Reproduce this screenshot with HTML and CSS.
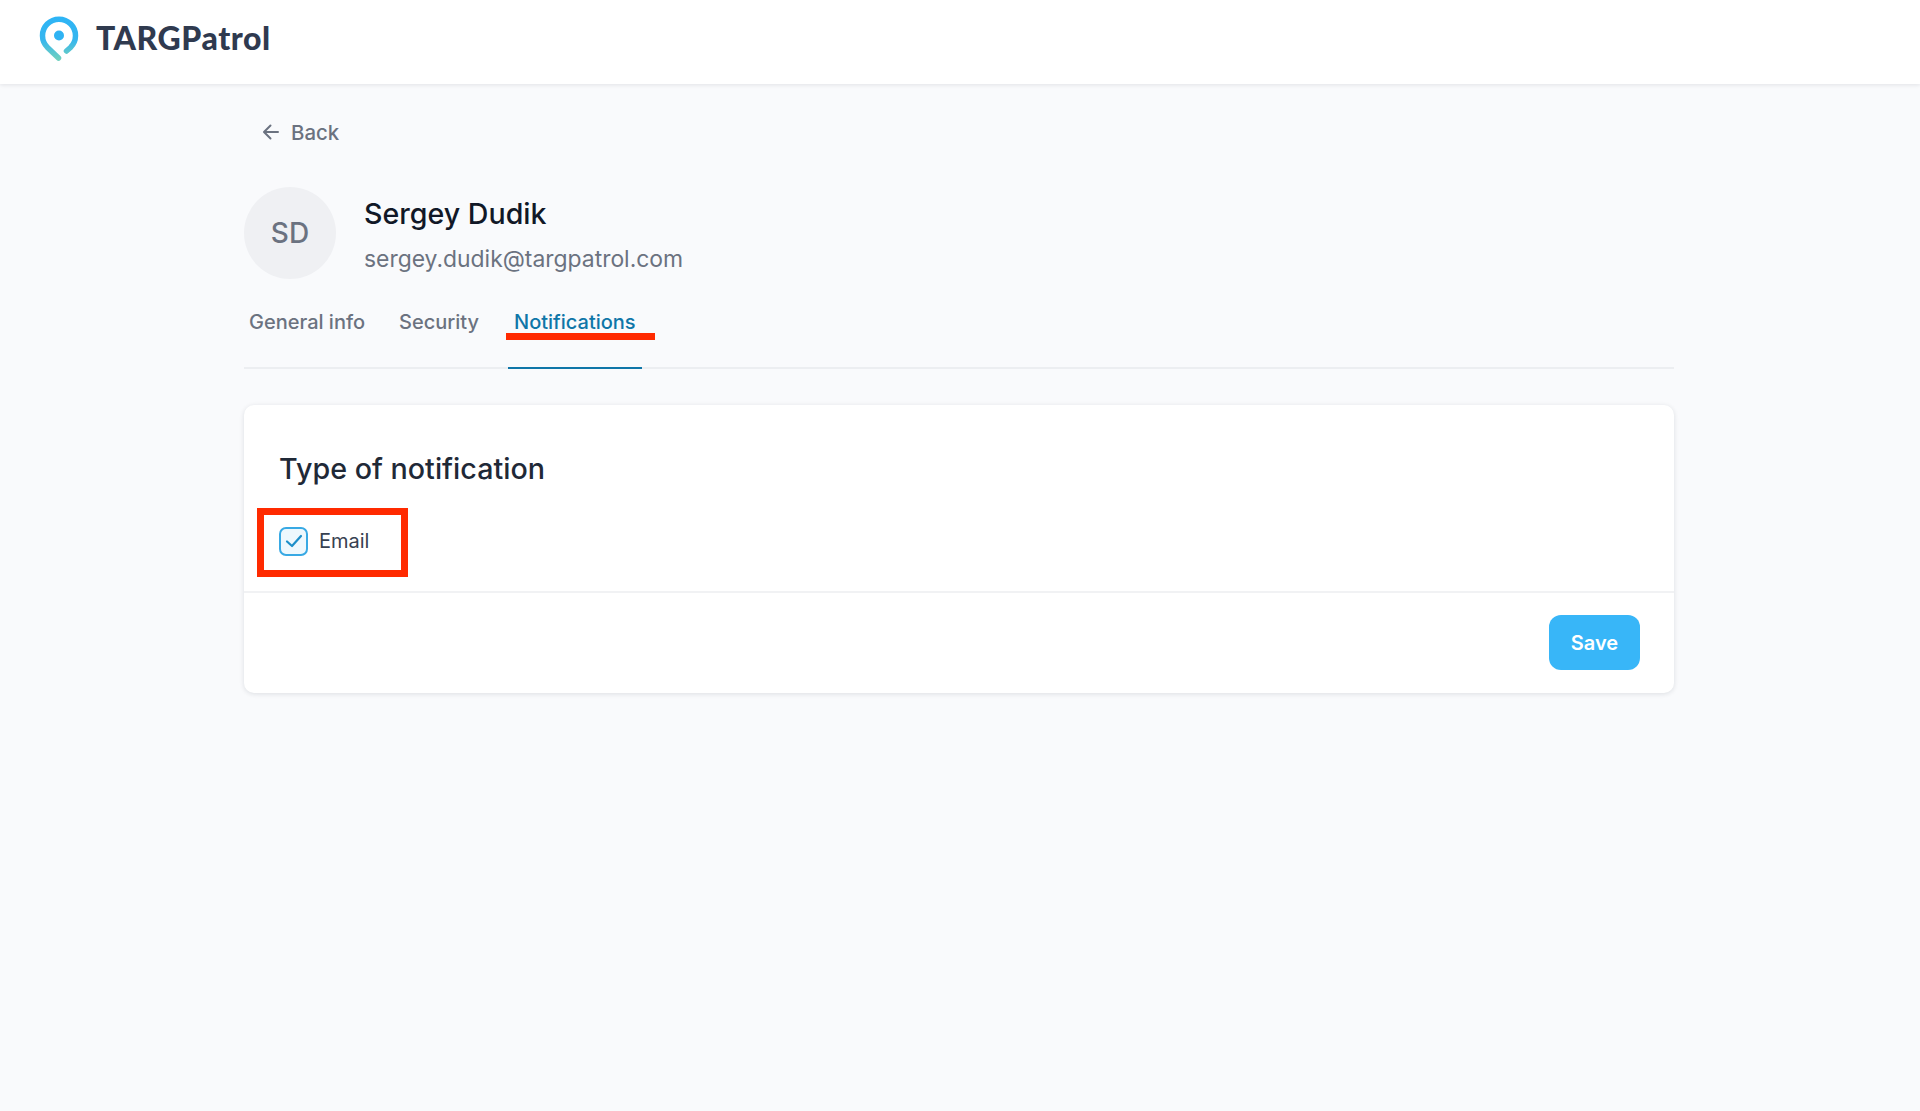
FILE: index.html
```html
<!DOCTYPE html>
<html lang="en">
<head>
  <meta charset="UTF-8">
  <meta name="viewport" content="width=device-width, initial-scale=1.0">
  <title>TARGPatrol - Notifications</title>
  <link rel="stylesheet" href="styles.css">
</head>
<body>
  <header class="topbar">
    <svg class="logo-icon" width="40" height="46" viewBox="0 0 40 46" fill="none">
      <defs>
        <linearGradient id="logo-grad" gradientUnits="userSpaceOnUse" x1="20" y1="2" x2="20" y2="44">
          <stop offset="0" stop-color="#2db4f6"/>
          <stop offset="0.55" stop-color="#36b6ee"/>
          <stop offset="1" stop-color="#6fd0bf"/>
        </linearGradient>
      </defs>
      <path d="M19.5 43 L8.5 32.5 A16.5 16.5 0 1 1 31.5 32.5 L27.5 36" stroke="url(#logo-grad)" stroke-width="5.5" stroke-linecap="round" stroke-linejoin="round"/>
      <circle cx="20" cy="20.5" r="5" fill="#2fb3f3"/>
    </svg>
    <span class="logo-text">TARGPatrol</span>
  </header>

  <main class="content">
    <a class="back-link" href="#">
      <svg width="20" height="20" viewBox="0 0 20 20" fill="none" stroke="#6b7280" stroke-width="2" stroke-linecap="round" stroke-linejoin="round">
        <path d="M17 10H3.5M9.5 3.5L3 10l6.5 6.5"/>
      </svg>
      <span>Back</span>
    </a>

    <div class="profile">
      <div class="avatar">SD</div>
      <div class="profile-info">
        <div class="profile-name">Sergey Dudik</div>
        <div class="profile-email">sergey.dudik@targpatrol.com</div>
      </div>
    </div>

    <nav class="tabs">
      <a class="tab" href="#">General info</a>
      <a class="tab" href="#">Security</a>
      <a class="tab active" href="#">Notifications<span class="red-mark"></span></a>
    </nav>

    <section class="card">
      <div class="card-body">
        <h2 class="card-title">Type of notification</h2>
        <label class="check-row">
          <span class="checkbox">
            <svg width="20" height="16" viewBox="0 0 20 16" fill="none" stroke="#1d8fc9" stroke-width="2.2" stroke-linecap="round" stroke-linejoin="round">
              <path d="M3 8.5l5 4.5L17 3"/>
            </svg>
          </span>
          <span>Email</span>
        </label>
      </div>
      <div class="card-footer">
        <button class="save-btn" type="button">Save</button>
      </div>
    </section>
  </main>
</body>
</html>
```

FILE: styles.css
```css
* {
  margin: 0;
  padding: 0;
  box-sizing: border-box;
}

body {
  font-family: Inter, 'Noto Sans', sans-serif;
  background: #f9fafc;
  color: #111827;
  min-height: 100vh;
}

a {
  text-decoration: none;
}

.topbar {
  display: flex;
  align-items: center;
  height: 84px;
  padding: 0 0 9px 39px;
  background: #ffffff;
  box-shadow: 0 1px 4px rgba(17, 24, 39, 0.1);
}

.logo-icon {
  margin-right: 17px;
}

.logo-text {
  font-family: Lato, sans-serif;
  font-size: 32px;
  font-weight: 900;
  letter-spacing: 0.55px;
  color: #2f3a4f;
}

.content {
  width: 1430px;
  margin-left: 244px;
}

.back-link {
  display: flex;
  align-items: center;
  gap: 10px;
  margin: 36px 0 0 17px;
  height: 24px;
  font-size: 20.4px;
  font-weight: 500;
  color: #6b7280;
}

.profile {
  display: flex;
  align-items: center;
  gap: 28px;
  margin-top: 43px;
}

.avatar {
  display: flex;
  align-items: center;
  justify-content: center;
  width: 92px;
  height: 92px;
  border-radius: 50%;
  background: #eff0f3;
  font-size: 28px;
  font-weight: 500;
  color: #6b7280;
}

.profile-info {
  padding-top: 4px;
}

.profile-name {
  font-size: 28.6px;
  line-height: 36px;
  font-weight: 500;
  color: #111827;
}

.profile-email {
  margin-top: 11px;
  font-size: 22.9px;
  line-height: 32px;
  color: #6b7280;
}

.tabs {
  display: flex;
  gap: 18px;
  margin-top: 24px;
  height: 66px;
  padding-left: 5px;
  border-bottom: 2px solid #eceef1;
}

.tab {
  position: relative;
  height: 66px;
  padding: 5px 0 0;
  margin-right: 16px;
  font-size: 20px;
  line-height: 28px;
  font-weight: 500;
  color: #6b7280;
}

.tab.active {
  margin-left: -5px;
  padding: 5px 6px 0;
  color: #0f76a8;
  border-bottom: 2px solid #0f76a8;
}

.red-mark {
  position: absolute;
  left: -2px;
  top: 30px;
  width: 149px;
  height: 7px;
  background: #ff2a00;
}

.card {
  margin-top: 36px;
  background: #ffffff;
  border-radius: 10px;
  box-shadow: 0 1px 5px rgba(17, 24, 39, 0.12);
}

.card-body {
  height: 188px;
  padding: 46px 0 0 13px;
  border-bottom: 2px solid #f1f2f4;
}

.card-title {
  margin-left: 22px;
  font-size: 28.7px;
  line-height: 36px;
  font-weight: 500;
  color: #1f2937;
}

.check-row {
  display: flex;
  align-items: center;
  gap: 11px;
  width: 151px;
  height: 69px;
  margin-top: 21px;
  padding: 0 0 3px 15px;
  border: 7px solid #ff2a00;
  font-size: 20px;
  color: #374151;
}

.checkbox {
  display: flex;
  align-items: center;
  justify-content: center;
  width: 29px;
  height: 29px;
  border: 2px solid #38a9e4;
  border-radius: 7px;
  background: #eef8fd;
}

.card-footer {
  display: flex;
  justify-content: flex-end;
  padding: 22px 34px 23px 0;
}

.save-btn {
  width: 91px;
  height: 55px;
  border: none;
  border-radius: 12px;
  background: #38b6f8;
  font-family: inherit;
  font-size: 20px;
  font-weight: 600;
  color: #ffffff;
}
```
